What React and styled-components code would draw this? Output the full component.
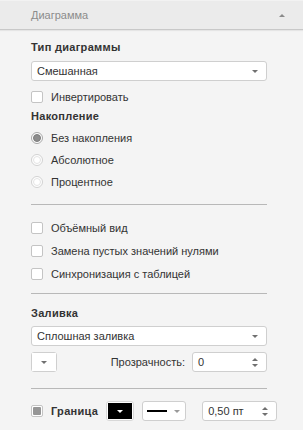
import React from "react";
import styled, { createGlobalStyle } from "styled-components";

const Global = createGlobalStyle`
  html, body { margin: 0; padding: 0; background: #f4f4f4; }
  body { font-family: "Liberation Sans", Arial, sans-serif; font-size: 11px; color: #333; }
  * { box-sizing: border-box; }
`;

const Panel = styled.div`
  width: 303px;
  height: 430px;
  background: #f4f4f4;
  overflow: hidden;
`;

const Header = styled.div`
  height: 30px;
  background: #ebebeb;
  border-top: 1px solid #f2f2f2;
  border-bottom: 1px solid #c8c8c8;
  box-shadow: 0 1px 1px rgba(0,0,0,0.06);
  display: flex;
  align-items: center;
  justify-content: space-between;
  padding: 0 18px 0 31px;
  color: #8c8c8c;
  font-size: 11px;
`;

const Body = styled.div`
  padding: 10px 36px 0 31px;
  display: flex;
  flex-direction: column;
`;

const Title = styled.div`
  font-weight: bold;
  font-size: 11px;
  line-height: 14px;
  height: 14px;
  color: #333;
  letter-spacing: 0.3px;
  margin-top: ${(p) => p.$mt || 0}px;
`;

const Select = styled.div`
  height: 20px;
  width: 100%;
  background: #fff;
  border: 1px solid #cfcfcf;
  border-radius: 3px;
  display: flex;
  align-items: center;
  justify-content: space-between;
  padding: 0 8px 0 5px;
  margin-top: ${(p) => p.$mt || 0}px;
  flex-shrink: 0;
`;

const Caret = styled.span`
  width: 0;
  height: 0;
  border-left: 3px solid transparent;
  border-right: 3px solid transparent;
  border-${(p) => (p.$up ? "bottom" : "top")}: 3px solid ${(p) => p.$color || "#707070"};
`;

const Row = styled.div`
  display: flex;
  align-items: center;
  height: ${(p) => p.$h || 16}px;
  margin-top: ${(p) => p.$mt || 0}px;
  gap: ${(p) => p.$gap ?? 8}px;
`;

const List = styled.div`
  display: flex;
  flex-direction: column;
  margin-top: ${(p) => p.$mt || 0}px;
`;

const CheckBox = styled.span`
  width: 12px;
  height: 12px;
  border: 1px solid #c4c4c4;
  border-radius: 2px;
  background: #fff;
  flex-shrink: 0;
  display: flex;
  align-items: center;
  justify-content: center;
  &::after {
    content: "";
    display: ${(p) => (p.$partial ? "block" : "none")};
    width: 8px;
    height: 8px;
    background: #969696;
    border-radius: 1px;
  }
`;

const Radio = styled.span`
  width: 12px;
  height: 12px;
  border-radius: 50%;
  border: 1px solid ${(p) => (p.$on ? "#a8a8a8" : "#d2d2d2")};
  background: #fff;
  flex-shrink: 0;
  display: flex;
  align-items: center;
  justify-content: center;
  &::after {
    content: "";
    width: 6px;
    height: 6px;
    border-radius: 50%;
    background: ${(p) => (p.$on ? "#8c8c8c" : "#fff")};
    border: 1px solid ${(p) => (p.$on ? "#7c7c7c" : "#e4e4e4")};
  }
`;

const Label = styled.span`
  line-height: 14px;
  white-space: nowrap;
  color: #333;
`;

const BoldLabel = styled(Label)`
  font-weight: bold;
  letter-spacing: 0.3px;
`;

const Separator = styled.div`
  height: 1px;
  background: #b8b8b8;
  margin-top: ${(p) => p.$mt || 0}px;
`;

const ColorButton = styled.div`
  width: ${(p) => p.$w}px;
  height: 20px;
  border-radius: 3px;
  border: 1px solid ${(p) => (p.$dark ? "#d8d8d8" : "#cfcfcf")};
  background: #fff;
  padding: ${(p) => (p.$dark ? "1px" : "0")};
  display: flex;
  flex-shrink: 0;
`;

const Swatch = styled.div`
  flex: 1;
  background: ${(p) => p.$bg || "#fff"};
  display: flex;
  align-items: center;
  justify-content: center;
`;

const LineSelect = styled.div`
  width: 44px;
  height: 20px;
  border: 1px solid #cfcfcf;
  border-radius: 3px;
  background: #fff;
  display: flex;
  align-items: center;
  padding: 0 5px 0 4px;
  gap: 7px;
  flex-shrink: 0;
`;

const LineSample = styled.div`
  width: 20px;
  height: 2px;
  background: #000;
`;

const Spinner = styled.div`
  width: 75px;
  height: 20px;
  border: 1px solid #cfcfcf;
  border-radius: 3px;
  background: #fff;
  display: flex;
  align-items: center;
  justify-content: space-between;
  padding: 0 8px 0 5px;
  flex-shrink: 0;
`;

const Arrows = styled.div`
  display: flex;
  flex-direction: column;
  gap: 3px;
  align-items: center;
`;

const Spacer = styled.div`
  flex: 1;
`;

const checks = ["Объёмный вид", "Замена пустых значений нулями", "Синхронизация с таблицей"];
const radios = [
  { t: "Без накопления", on: true },
  { t: "Абсолютное", on: false },
  { t: "Процентное", on: false },
];

export default function App() {
  return (
    <>
      <Global />
      <Panel>
        <Header>
          <span>Диаграмма</span>
          <Caret $up $color="#8a8a8a" />
        </Header>
        <Body>
          <Title>Тип диаграммы</Title>
          <Select $mt={7}>
            <Label>Смешанная</Label>
            <Caret />
          </Select>
          <Row $mt={8}>
            <CheckBox />
            <Label>Инвертировать</Label>
          </Row>
          <Title $mt={4}>Накопление</Title>
          <List $mt={4}>
            {radios.map((r) => (
              <Row key={r.t} $h={22}>
                <Radio $on={r.on} />
                <Label>{r.t}</Label>
              </Row>
            ))}
          </List>
          <Separator $mt={11} />
          <List $mt={11}>
            {checks.map((c) => (
              <Row key={c} $h={23}>
                <CheckBox />
                <Label>{c}</Label>
              </Row>
            ))}
          </List>
          <Separator $mt={8} />
          <Title $mt={12}>Заливка</Title>
          <Select $mt={6}>
            <Label>Сплошная заливка</Label>
            <Caret />
          </Select>
          <Row $h={20} $mt={6} $gap={7}>
            <ColorButton $w={26}>
              <Swatch>
                <Caret />
              </Swatch>
            </ColorButton>
            <Spacer />
            <Label>Прозрачность:</Label>
            <Spinner>
              <Label>0</Label>
              <Arrows>
                <Caret $up />
                <Caret />
              </Arrows>
            </Spinner>
          </Row>
          <Separator $mt={16} />
          <Row $h={20} $mt={12} $gap={8}>
            <CheckBox $partial />
            <BoldLabel>Граница</BoldLabel>
            <ColorButton $w={28} $dark>
              <Swatch $bg="#000">
                <Caret $color="#fff" />
              </Swatch>
            </ColorButton>
            <LineSelect>
              <LineSample />
              <Caret $color="#9a9a9a" />
            </LineSelect>
            <Spacer />
            <Spinner>
              <Label>0,50 пт</Label>
              <Arrows>
                <Caret $up />
                <Caret />
              </Arrows>
            </Spinner>
          </Row>
        </Body>
      </Panel>
    </>
  );
}
